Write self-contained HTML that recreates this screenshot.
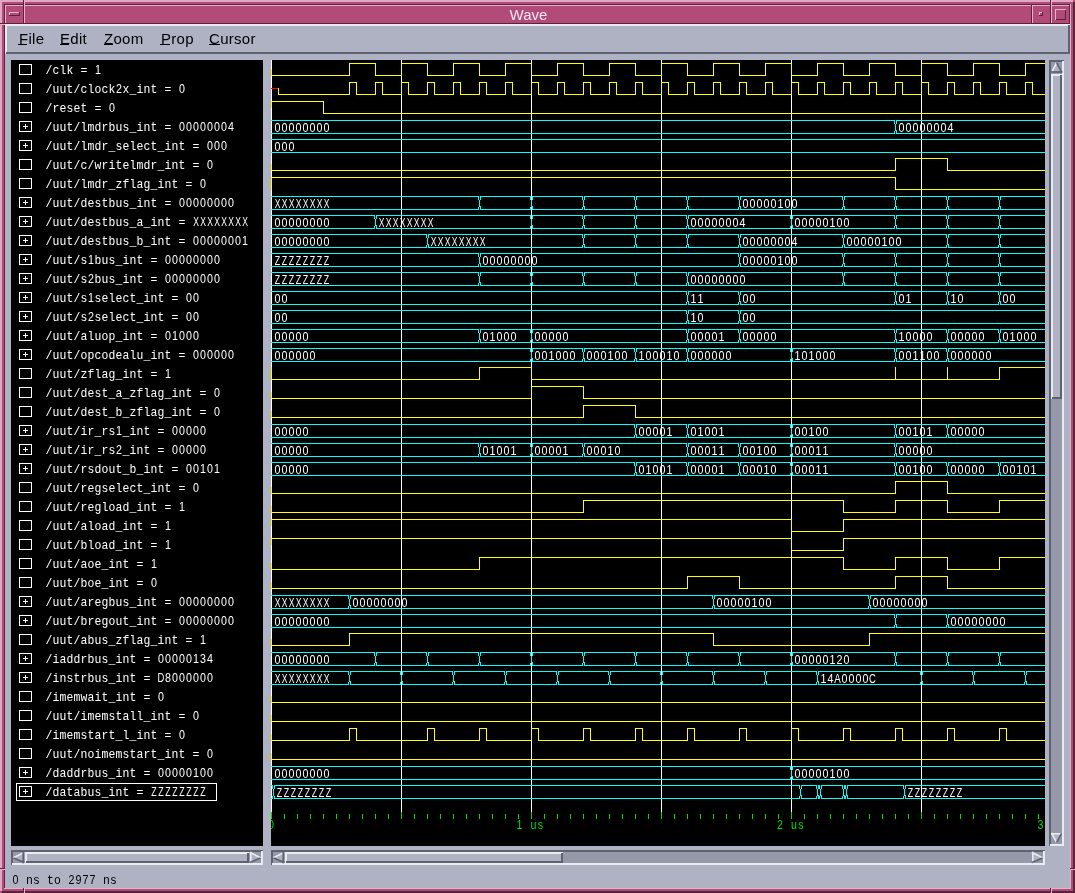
<!DOCTYPE html>
<html><head><meta charset="utf-8"><title>Wave</title><style>
html,body{margin:0;padding:0;width:1075px;height:893px;overflow:hidden;background:#aeb2c3}
svg{display:block;will-change:transform}
text{white-space:pre}
.nm{font-family:"Liberation Mono",monospace;font-size:13px;fill:#fff}
.nmd{font-family:"Liberation Sans",sans-serif;font-size:12.6px;fill:#fff}
.wv{font-family:"Liberation Sans",sans-serif;font-size:12.6px;fill:#fff}
.rl{font-family:"Liberation Sans",sans-serif;font-size:12.6px;fill:#00e000}
.st{font-family:"Liberation Mono",monospace;font-size:13px;fill:#000}
.std{font-family:"Liberation Sans",sans-serif;font-size:12.6px;fill:#000}
.mn{font-family:"Liberation Sans",sans-serif;font-size:15px;letter-spacing:0.3px;fill:#000}
.tt{font-family:"Liberation Sans",sans-serif;font-size:15px;fill:#f4e8ee}
</style></head>
<body><svg width="1075" height="893" viewBox="0 0 1075 893">
<g shape-rendering="crispEdges"><path fill="#b24b78" d="M0 0h1075v893h-1075z"/><path fill="#e0a8c2" d="M0 0h1073v2h-1073zM0 0h2v891h-2z"/><path fill="#58233b" d="M2 891h1073v2h-1073zM1073 2h2v891h-2zM4 4h1067v1h-1067zM4 4h1v885h-1z"/><path fill="#e6b2ca" d="M4 888h1067v1h-1067zM1070 4h1v885h-1z"/><path fill="#58233b" d="M23 0h1v5h-1z"/><path fill="#e6b2ca" d="M24 0h1v5h-1z"/><path fill="#58233b" d="M0 23h5v1h-5z"/><path fill="#e6b2ca" d="M0 24h5v1h-5z"/><path fill="#58233b" d="M1050 0h1v5h-1z"/><path fill="#e6b2ca" d="M1051 0h1v5h-1z"/><path fill="#58233b" d="M1070 868h5v1h-5z"/><path fill="#e6b2ca" d="M1070 869h5v1h-5z"/><path fill="#58233b" d="M23 888h1v5h-1z"/><path fill="#e6b2ca" d="M24 888h1v5h-1z"/><path fill="#58233b" d="M1050 888h1v5h-1z"/><path fill="#e6b2ca" d="M1051 888h1v5h-1z"/><path fill="#58233b" d="M0 868h5v1h-5z"/><path fill="#e6b2ca" d="M0 869h5v1h-5zM5 5h19v1h-19zM5 5h1v19h-1z"/><path fill="#58233b" d="M5 23h19v1h-19zM23 5h1v19h-1z"/><path fill="#e6b2ca" d="M24 5h1008v1h-1008zM24 5h1v19h-1z"/><path fill="#58233b" d="M24 23h1008v1h-1008zM1031 5h1v19h-1z"/><path fill="#e6b2ca" d="M1032 5h19v1h-19zM1032 5h1v19h-1z"/><path fill="#58233b" d="M1032 23h19v1h-19zM1050 5h1v19h-1z"/><path fill="#e6b2ca" d="M1051 5h19v1h-19zM1051 5h1v19h-1z"/><path fill="#58233b" d="M1051 23h19v1h-19zM1069 5h1v19h-1z"/><path fill="#e6b2ca" d="M9 12h11v1h-11zM9 12h1v4h-1z"/><path fill="#58233b" d="M9 15h11v1h-11zM19 12h1v4h-1z"/><path fill="#e6b2ca" d="M1039 12h4v1h-4zM1039 12h1v4h-1z"/><path fill="#58233b" d="M1039 15h4v1h-4zM1042 12h1v4h-1z"/><path fill="#e6b2ca" d="M1055 9h11v1h-11zM1055 9h1v11h-1z"/><path fill="#58233b" d="M1056 19h10v1h-10zM1065 10h1v10h-1z"/><path fill="#aeb2c3" d="M5 24h1065v864h-1065z"/><path fill="#000000" d="M11 60h252v786h-252zM271 60h774v786h-774z"/><path fill="#e9ebf0" d="M5 24h1065v1h-1065zM5 24h1v30h-1z"/><path fill="#5e6270" d="M6 53h1064v1h-1064zM1069 25h1v29h-1z"/><path fill="#e9ebf0" d="M5 25h1064v1h-1064zM6 24h1v29h-1z"/><path fill="#5e6270" d="M6 52h1064v1h-1064zM1068 25h1v29h-1z"/><path fill="#9599a9" d="M11 850h252v15h-252z"/><path fill="#5e6270" d="M11 850h252v1h-252zM11 850h1v15h-1z"/><path fill="#e9ebf0" d="M12 864h251v1h-251zM262 851h1v14h-1z"/><path fill="#5e6270" d="M11 851h251v1h-251zM12 850h1v14h-1z"/><path fill="#e9ebf0" d="M12 863h251v1h-251zM261 851h1v14h-1z"/><path fill="#aeb2c3" d="M25 852h224v11h-224z"/><path fill="#e9ebf0" d="M25 852h224v1h-224zM25 852h1v11h-1z"/><path fill="#5e6270" d="M26 862h223v1h-223zM248 853h1v10h-1z"/><path fill="#e9ebf0" d="M25 853h223v1h-223zM26 852h1v10h-1z"/><path fill="#5e6270" d="M26 861h223v1h-223zM247 853h1v10h-1z"/><path fill="#9599a9" d="M271 850h774v15h-774z"/><path fill="#5e6270" d="M271 850h774v1h-774zM271 850h1v15h-1z"/><path fill="#e9ebf0" d="M272 864h773v1h-773zM1044 851h1v14h-1z"/><path fill="#5e6270" d="M271 851h773v1h-773zM272 850h1v14h-1z"/><path fill="#e9ebf0" d="M272 863h773v1h-773zM1043 851h1v14h-1z"/><path fill="#aeb2c3" d="M285 852h278v11h-278z"/><path fill="#e9ebf0" d="M285 852h278v1h-278zM285 852h1v11h-1z"/><path fill="#5e6270" d="M286 862h277v1h-277zM562 853h1v10h-1z"/><path fill="#e9ebf0" d="M285 853h277v1h-277zM286 852h1v10h-1z"/><path fill="#5e6270" d="M286 861h277v1h-277zM561 853h1v10h-1z"/><path fill="#9599a9" d="M1049 60h15v786h-15z"/><path fill="#5e6270" d="M1049 60h15v1h-15zM1049 60h1v786h-1z"/><path fill="#e9ebf0" d="M1050 845h14v1h-14zM1063 61h1v785h-1z"/><path fill="#5e6270" d="M1049 61h14v1h-14zM1050 60h1v785h-1z"/><path fill="#e9ebf0" d="M1050 844h14v1h-14zM1062 61h1v785h-1z"/><path fill="#aeb2c3" d="M1051 74h11v325h-11z"/><path fill="#e9ebf0" d="M1051 74h11v1h-11zM1051 74h1v325h-1z"/><path fill="#5e6270" d="M1052 398h10v1h-10zM1061 75h1v324h-1z"/><path fill="#e9ebf0" d="M1051 75h10v1h-10zM1052 74h1v324h-1z"/><path fill="#5e6270" d="M1052 397h10v1h-10zM1060 75h1v324h-1z"/><path fill="#ffffff" d="M19 64h13v1h-13zM19 74h13v1h-13zM19 64h1v11h-1zM31 64h1v11h-1zM19 83h13v1h-13zM19 93h13v1h-13zM19 83h1v11h-1zM31 83h1v11h-1zM19 102h13v1h-13zM19 112h13v1h-13zM19 102h1v11h-1zM31 102h1v11h-1zM19 121h13v1h-13zM19 131h13v1h-13zM19 121h1v11h-1zM31 121h1v11h-1zM23 126h5v1h-5zM25 124h1v5h-1zM19 140h13v1h-13zM19 150h13v1h-13zM19 140h1v11h-1zM31 140h1v11h-1zM23 145h5v1h-5zM25 143h1v5h-1zM19 159h13v1h-13zM19 169h13v1h-13zM19 159h1v11h-1zM31 159h1v11h-1zM19 178h13v1h-13zM19 188h13v1h-13zM19 178h1v11h-1zM31 178h1v11h-1zM19 197h13v1h-13zM19 207h13v1h-13zM19 197h1v11h-1zM31 197h1v11h-1zM23 202h5v1h-5zM25 200h1v5h-1zM19 216h13v1h-13zM19 226h13v1h-13zM19 216h1v11h-1zM31 216h1v11h-1zM23 221h5v1h-5zM25 219h1v5h-1zM19 235h13v1h-13zM19 245h13v1h-13zM19 235h1v11h-1zM31 235h1v11h-1zM23 240h5v1h-5zM25 238h1v5h-1zM19 254h13v1h-13zM19 264h13v1h-13zM19 254h1v11h-1zM31 254h1v11h-1zM23 259h5v1h-5zM25 257h1v5h-1zM19 273h13v1h-13zM19 283h13v1h-13zM19 273h1v11h-1zM31 273h1v11h-1zM23 278h5v1h-5zM25 276h1v5h-1zM19 292h13v1h-13zM19 302h13v1h-13zM19 292h1v11h-1zM31 292h1v11h-1zM23 297h5v1h-5zM25 295h1v5h-1zM19 311h13v1h-13zM19 321h13v1h-13zM19 311h1v11h-1zM31 311h1v11h-1zM23 316h5v1h-5zM25 314h1v5h-1zM19 330h13v1h-13zM19 340h13v1h-13zM19 330h1v11h-1zM31 330h1v11h-1zM23 335h5v1h-5zM25 333h1v5h-1zM19 349h13v1h-13zM19 359h13v1h-13zM19 349h1v11h-1zM31 349h1v11h-1zM23 354h5v1h-5zM25 352h1v5h-1zM19 368h13v1h-13zM19 378h13v1h-13zM19 368h1v11h-1zM31 368h1v11h-1zM19 387h13v1h-13zM19 397h13v1h-13zM19 387h1v11h-1zM31 387h1v11h-1zM19 406h13v1h-13zM19 416h13v1h-13zM19 406h1v11h-1zM31 406h1v11h-1zM19 425h13v1h-13zM19 435h13v1h-13zM19 425h1v11h-1zM31 425h1v11h-1zM23 430h5v1h-5zM25 428h1v5h-1zM19 444h13v1h-13zM19 454h13v1h-13zM19 444h1v11h-1zM31 444h1v11h-1zM23 449h5v1h-5zM25 447h1v5h-1zM19 463h13v1h-13zM19 473h13v1h-13zM19 463h1v11h-1zM31 463h1v11h-1zM23 468h5v1h-5zM25 466h1v5h-1zM19 482h13v1h-13zM19 492h13v1h-13zM19 482h1v11h-1zM31 482h1v11h-1zM19 501h13v1h-13zM19 511h13v1h-13zM19 501h1v11h-1zM31 501h1v11h-1zM19 520h13v1h-13zM19 530h13v1h-13zM19 520h1v11h-1zM31 520h1v11h-1zM19 539h13v1h-13zM19 549h13v1h-13zM19 539h1v11h-1zM31 539h1v11h-1zM19 558h13v1h-13zM19 568h13v1h-13zM19 558h1v11h-1zM31 558h1v11h-1zM19 577h13v1h-13zM19 587h13v1h-13zM19 577h1v11h-1zM31 577h1v11h-1zM19 596h13v1h-13zM19 606h13v1h-13zM19 596h1v11h-1zM31 596h1v11h-1zM23 601h5v1h-5zM25 599h1v5h-1zM19 615h13v1h-13zM19 625h13v1h-13zM19 615h1v11h-1zM31 615h1v11h-1zM23 620h5v1h-5zM25 618h1v5h-1zM19 634h13v1h-13zM19 644h13v1h-13zM19 634h1v11h-1zM31 634h1v11h-1zM19 653h13v1h-13zM19 663h13v1h-13zM19 653h1v11h-1zM31 653h1v11h-1zM23 658h5v1h-5zM25 656h1v5h-1zM19 672h13v1h-13zM19 682h13v1h-13zM19 672h1v11h-1zM31 672h1v11h-1zM23 677h5v1h-5zM25 675h1v5h-1zM19 691h13v1h-13zM19 701h13v1h-13zM19 691h1v11h-1zM31 691h1v11h-1zM19 710h13v1h-13zM19 720h13v1h-13zM19 710h1v11h-1zM31 710h1v11h-1zM19 729h13v1h-13zM19 739h13v1h-13zM19 729h1v11h-1zM31 729h1v11h-1zM19 748h13v1h-13zM19 758h13v1h-13zM19 748h1v11h-1zM31 748h1v11h-1zM19 767h13v1h-13zM19 777h13v1h-13zM19 767h1v11h-1zM31 767h1v11h-1zM23 772h5v1h-5zM25 770h1v5h-1zM19 786h13v1h-13zM19 796h13v1h-13zM19 786h1v11h-1zM31 786h1v11h-1zM23 791h5v1h-5zM25 789h1v5h-1zM16 783h201v1h-201zM16 800h201v1h-201zM16 783h1v18h-1zM216 783h1v18h-1zM271 60h1v752h-1zM401 60h1v752h-1zM531 60h1v752h-1zM661 60h1v752h-1zM791 60h1v752h-1zM921 60h1v752h-1z"/><path fill="#00e000" d="M271 812h1v7h-1zM284 814h1v5h-1zM297 814h1v5h-1zM310 814h1v5h-1zM323 814h1v5h-1zM336 814h1v5h-1zM349 814h1v5h-1zM362 814h1v5h-1zM375 814h1v5h-1zM388 814h1v5h-1zM401 812h1v7h-1zM414 814h1v5h-1zM427 814h1v5h-1zM440 814h1v5h-1zM453 814h1v5h-1zM466 814h1v5h-1zM479 814h1v5h-1zM492 814h1v5h-1zM505 814h1v5h-1zM518 814h1v5h-1zM531 812h1v7h-1zM544 814h1v5h-1zM557 814h1v5h-1zM570 814h1v5h-1zM583 814h1v5h-1zM596 814h1v5h-1zM609 814h1v5h-1zM622 814h1v5h-1zM635 814h1v5h-1zM648 814h1v5h-1zM661 812h1v7h-1zM674 814h1v5h-1zM687 814h1v5h-1zM700 814h1v5h-1zM713 814h1v5h-1zM726 814h1v5h-1zM739 814h1v5h-1zM752 814h1v5h-1zM765 814h1v5h-1zM778 814h1v5h-1zM791 812h1v7h-1zM804 814h1v5h-1zM817 814h1v5h-1zM830 814h1v5h-1zM843 814h1v5h-1zM856 814h1v5h-1zM869 814h1v5h-1zM882 814h1v5h-1zM895 814h1v5h-1zM908 814h1v5h-1zM921 812h1v7h-1zM934 814h1v5h-1zM947 814h1v5h-1zM960 814h1v5h-1zM973 814h1v5h-1zM986 814h1v5h-1zM999 814h1v5h-1zM1012 814h1v5h-1zM1025 814h1v5h-1zM1038 814h1v5h-1z"/><path fill="#ffff00" d="M271 69h1v7h-1zM271 75h79v1h-79zM349 63h1v13h-1zM349 63h27v1h-27zM375 63h1v13h-1zM375 75h27v1h-27zM401 63h1v13h-1zM401 63h27v1h-27zM427 63h1v13h-1zM427 75h27v1h-27zM453 63h1v13h-1zM453 63h27v1h-27zM479 63h1v13h-1zM479 75h27v1h-27zM505 63h1v13h-1zM505 63h27v1h-27zM531 63h1v13h-1zM531 75h27v1h-27zM557 63h1v13h-1zM557 63h27v1h-27zM583 63h1v13h-1zM583 75h27v1h-27zM609 63h1v13h-1zM609 63h27v1h-27zM635 63h1v13h-1zM635 75h27v1h-27zM661 63h1v13h-1zM661 63h27v1h-27zM687 63h1v13h-1zM687 75h27v1h-27zM713 63h1v13h-1zM713 63h27v1h-27zM739 63h1v13h-1zM739 75h27v1h-27zM765 63h1v13h-1zM765 63h27v1h-27zM791 63h1v13h-1zM791 75h27v1h-27zM817 63h1v13h-1zM817 63h27v1h-27zM843 63h1v13h-1zM843 75h27v1h-27zM869 63h1v13h-1zM869 63h27v1h-27zM895 63h1v13h-1zM895 75h27v1h-27zM921 63h1v13h-1zM921 63h27v1h-27zM947 63h1v13h-1zM947 75h27v1h-27zM973 63h1v13h-1zM973 63h27v1h-27zM999 63h1v13h-1zM999 75h27v1h-27zM1025 63h1v13h-1zM1025 63h20v1h-20z"/><path fill="#ff0000" d="M271 88h7v1h-7z"/><path fill="#ffff00" d="M278 88h1v7h-1zM278 94h72v1h-72zM349 82h1v13h-1zM349 82h8v1h-8zM356 82h1v13h-1zM356 94h20v1h-20zM375 82h1v13h-1zM375 82h8v1h-8zM382 82h1v13h-1zM382 94h20v1h-20zM401 82h1v13h-1zM401 82h8v1h-8zM408 82h1v13h-1zM408 94h20v1h-20zM427 82h1v13h-1zM427 82h8v1h-8zM434 82h1v13h-1zM434 94h20v1h-20zM453 82h1v13h-1zM453 82h8v1h-8zM460 82h1v13h-1zM460 94h20v1h-20zM479 82h1v13h-1zM479 82h8v1h-8zM486 82h1v13h-1zM486 94h20v1h-20zM505 82h1v13h-1zM505 82h8v1h-8zM512 82h1v13h-1zM512 94h20v1h-20zM531 82h1v13h-1zM531 82h8v1h-8zM538 82h1v13h-1zM538 94h20v1h-20zM557 82h1v13h-1zM557 82h8v1h-8zM564 82h1v13h-1zM564 94h20v1h-20zM583 82h1v13h-1zM583 82h8v1h-8zM590 82h1v13h-1zM590 94h20v1h-20zM609 82h1v13h-1zM609 82h8v1h-8zM616 82h1v13h-1zM616 94h20v1h-20zM635 82h1v13h-1zM635 82h8v1h-8zM642 82h1v13h-1zM642 94h20v1h-20zM661 82h1v13h-1zM661 82h8v1h-8zM668 82h1v13h-1zM668 94h20v1h-20zM687 82h1v13h-1zM687 82h8v1h-8zM694 82h1v13h-1zM694 94h20v1h-20zM713 82h1v13h-1zM713 82h8v1h-8zM720 82h1v13h-1zM720 94h20v1h-20zM739 82h1v13h-1zM739 82h8v1h-8zM746 82h1v13h-1zM746 94h20v1h-20zM765 82h1v13h-1zM765 82h8v1h-8zM772 82h1v13h-1zM772 94h20v1h-20zM791 82h1v13h-1zM791 82h8v1h-8zM798 82h1v13h-1zM798 94h20v1h-20zM817 82h1v13h-1zM817 82h8v1h-8zM824 82h1v13h-1zM824 94h20v1h-20zM843 82h1v13h-1zM843 82h8v1h-8zM850 82h1v13h-1zM850 94h20v1h-20zM869 82h1v13h-1zM869 82h8v1h-8zM876 82h1v13h-1zM876 94h20v1h-20zM895 82h1v13h-1zM895 82h8v1h-8zM902 82h1v13h-1zM902 94h20v1h-20zM921 82h1v13h-1zM921 82h8v1h-8zM928 82h1v13h-1zM928 94h20v1h-20zM947 82h1v13h-1zM947 82h8v1h-8zM954 82h1v13h-1zM954 94h20v1h-20zM973 82h1v13h-1zM973 82h8v1h-8zM980 82h1v13h-1zM980 94h20v1h-20zM999 82h1v13h-1zM999 82h8v1h-8zM1006 82h1v13h-1zM1006 94h20v1h-20zM1025 82h1v13h-1zM1025 82h8v1h-8zM1032 82h1v13h-1zM1032 94h13v1h-13zM271 101h1v7h-1zM271 101h53v1h-53zM323 101h1v13h-1zM323 113h722v1h-722z"/><path fill="#00ffff" d="M271 120h624v1h-624zM271 133h624v1h-624zM896 120h149v1h-149zM896 133h149v1h-149zM894 121h1v3h-1zM896 121h1v3h-1zM894 131h1v2h-1zM896 130h1v3h-1zM895 124h1v7h-1zM271 139h774v1h-774zM271 152h774v1h-774z"/><path fill="#ffff00" d="M271 164h1v7h-1zM271 170h625v1h-625zM895 158h1v13h-1zM895 158h53v1h-53zM947 158h1v13h-1zM947 170h98v1h-98zM271 177h1v13h-1zM271 177h625v1h-625zM895 177h1v13h-1zM895 189h150v1h-150z"/><path fill="#00ffff" d="M271 196h208v1h-208zM271 209h208v1h-208zM480 196h51v1h-51zM480 209h51v1h-51zM532 196h51v1h-51zM532 209h51v1h-51zM584 196h51v1h-51zM584 209h51v1h-51zM636 196h51v1h-51zM636 209h51v1h-51zM688 196h51v1h-51zM688 209h51v1h-51zM740 196h103v1h-103zM740 209h103v1h-103zM844 196h51v1h-51zM844 209h51v1h-51zM896 196h51v1h-51zM896 209h51v1h-51zM948 196h51v1h-51zM948 209h51v1h-51zM1000 196h45v1h-45zM1000 209h45v1h-45zM478 197h1v3h-1zM480 197h1v3h-1zM478 207h1v2h-1zM480 206h1v3h-1zM479 200h1v7h-1zM530 197h1v3h-1zM532 197h1v3h-1zM530 207h1v2h-1zM532 206h1v3h-1zM531 200h1v7h-1zM582 197h1v3h-1zM584 197h1v3h-1zM582 207h1v2h-1zM584 206h1v3h-1zM583 200h1v7h-1zM634 197h1v3h-1zM636 197h1v3h-1zM634 207h1v2h-1zM636 206h1v3h-1zM635 200h1v7h-1zM686 197h1v3h-1zM688 197h1v3h-1zM686 207h1v2h-1zM688 206h1v3h-1zM687 200h1v7h-1zM738 197h1v3h-1zM740 197h1v3h-1zM738 207h1v2h-1zM740 206h1v3h-1zM739 200h1v7h-1zM842 197h1v3h-1zM844 197h1v3h-1zM842 207h1v2h-1zM844 206h1v3h-1zM843 200h1v7h-1zM894 197h1v3h-1zM896 197h1v3h-1zM894 207h1v2h-1zM896 206h1v3h-1zM895 200h1v7h-1zM946 197h1v3h-1zM948 197h1v3h-1zM946 207h1v2h-1zM948 206h1v3h-1zM947 200h1v7h-1zM998 197h1v3h-1zM1000 197h1v3h-1zM998 207h1v2h-1zM1000 206h1v3h-1zM999 200h1v7h-1zM271 215h104v1h-104zM271 228h104v1h-104zM376 215h155v1h-155zM376 228h155v1h-155zM532 215h51v1h-51zM532 228h51v1h-51zM584 215h51v1h-51zM584 228h51v1h-51zM636 215h51v1h-51zM636 228h51v1h-51zM688 215h103v1h-103zM688 228h103v1h-103zM792 215h103v1h-103zM792 228h103v1h-103zM896 215h51v1h-51zM896 228h51v1h-51zM948 215h51v1h-51zM948 228h51v1h-51zM1000 215h45v1h-45zM1000 228h45v1h-45zM374 216h1v3h-1zM376 216h1v3h-1zM374 226h1v2h-1zM376 225h1v3h-1zM375 219h1v7h-1zM530 216h1v3h-1zM532 216h1v3h-1zM530 226h1v2h-1zM532 225h1v3h-1zM531 219h1v7h-1zM582 216h1v3h-1zM584 216h1v3h-1zM582 226h1v2h-1zM584 225h1v3h-1zM583 219h1v7h-1zM634 216h1v3h-1zM636 216h1v3h-1zM634 226h1v2h-1zM636 225h1v3h-1zM635 219h1v7h-1zM686 216h1v3h-1zM688 216h1v3h-1zM686 226h1v2h-1zM688 225h1v3h-1zM687 219h1v7h-1zM790 216h1v3h-1zM792 216h1v3h-1zM790 226h1v2h-1zM792 225h1v3h-1zM791 219h1v7h-1zM894 216h1v3h-1zM896 216h1v3h-1zM894 226h1v2h-1zM896 225h1v3h-1zM895 219h1v7h-1zM946 216h1v3h-1zM948 216h1v3h-1zM946 226h1v2h-1zM948 225h1v3h-1zM947 219h1v7h-1zM998 216h1v3h-1zM1000 216h1v3h-1zM998 226h1v2h-1zM1000 225h1v3h-1zM999 219h1v7h-1zM271 234h156v1h-156zM271 247h156v1h-156zM428 234h155v1h-155zM428 247h155v1h-155zM584 234h51v1h-51zM584 247h51v1h-51zM636 234h51v1h-51zM636 247h51v1h-51zM688 234h51v1h-51zM688 247h51v1h-51zM740 234h103v1h-103zM740 247h103v1h-103zM844 234h103v1h-103zM844 247h103v1h-103zM948 234h51v1h-51zM948 247h51v1h-51zM1000 234h45v1h-45zM1000 247h45v1h-45zM426 235h1v3h-1zM428 235h1v3h-1zM426 245h1v2h-1zM428 244h1v3h-1zM427 238h1v7h-1zM582 235h1v3h-1zM584 235h1v3h-1zM582 245h1v2h-1zM584 244h1v3h-1zM583 238h1v7h-1zM634 235h1v3h-1zM636 235h1v3h-1zM634 245h1v2h-1zM636 244h1v3h-1zM635 238h1v7h-1zM686 235h1v3h-1zM688 235h1v3h-1zM686 245h1v2h-1zM688 244h1v3h-1zM687 238h1v7h-1zM738 235h1v3h-1zM740 235h1v3h-1zM738 245h1v2h-1zM740 244h1v3h-1zM739 238h1v7h-1zM842 235h1v3h-1zM844 235h1v3h-1zM842 245h1v2h-1zM844 244h1v3h-1zM843 238h1v7h-1zM946 235h1v3h-1zM948 235h1v3h-1zM946 245h1v2h-1zM948 244h1v3h-1zM947 238h1v7h-1zM998 235h1v3h-1zM1000 235h1v3h-1zM998 245h1v2h-1zM1000 244h1v3h-1zM999 238h1v7h-1zM271 253h208v1h-208zM271 266h208v1h-208zM480 253h259v1h-259zM480 266h259v1h-259zM740 253h103v1h-103zM740 266h103v1h-103zM844 253h51v1h-51zM844 266h51v1h-51zM896 253h51v1h-51zM896 266h51v1h-51zM948 253h51v1h-51zM948 266h51v1h-51zM1000 253h45v1h-45zM1000 266h45v1h-45zM478 254h1v3h-1zM480 254h1v3h-1zM478 264h1v2h-1zM480 263h1v3h-1zM479 257h1v7h-1zM738 254h1v3h-1zM740 254h1v3h-1zM738 264h1v2h-1zM740 263h1v3h-1zM739 257h1v7h-1zM842 254h1v3h-1zM844 254h1v3h-1zM842 264h1v2h-1zM844 263h1v3h-1zM843 257h1v7h-1zM894 254h1v3h-1zM896 254h1v3h-1zM894 264h1v2h-1zM896 263h1v3h-1zM895 257h1v7h-1zM946 254h1v3h-1zM948 254h1v3h-1zM946 264h1v2h-1zM948 263h1v3h-1zM947 257h1v7h-1zM998 254h1v3h-1zM1000 254h1v3h-1zM998 264h1v2h-1zM1000 263h1v3h-1zM999 257h1v7h-1zM271 272h208v1h-208zM271 285h208v1h-208zM480 272h51v1h-51zM480 285h51v1h-51zM532 272h51v1h-51zM532 285h51v1h-51zM584 272h51v1h-51zM584 285h51v1h-51zM636 272h51v1h-51zM636 285h51v1h-51zM688 272h155v1h-155zM688 285h155v1h-155zM844 272h51v1h-51zM844 285h51v1h-51zM896 272h51v1h-51zM896 285h51v1h-51zM948 272h51v1h-51zM948 285h51v1h-51zM1000 272h45v1h-45zM1000 285h45v1h-45zM478 273h1v3h-1zM480 273h1v3h-1zM478 283h1v2h-1zM480 282h1v3h-1zM479 276h1v7h-1zM530 273h1v3h-1zM532 273h1v3h-1zM530 283h1v2h-1zM532 282h1v3h-1zM531 276h1v7h-1zM582 273h1v3h-1zM584 273h1v3h-1zM582 283h1v2h-1zM584 282h1v3h-1zM583 276h1v7h-1zM634 273h1v3h-1zM636 273h1v3h-1zM634 283h1v2h-1zM636 282h1v3h-1zM635 276h1v7h-1zM686 273h1v3h-1zM688 273h1v3h-1zM686 283h1v2h-1zM688 282h1v3h-1zM687 276h1v7h-1zM842 273h1v3h-1zM844 273h1v3h-1zM842 283h1v2h-1zM844 282h1v3h-1zM843 276h1v7h-1zM894 273h1v3h-1zM896 273h1v3h-1zM894 283h1v2h-1zM896 282h1v3h-1zM895 276h1v7h-1zM946 273h1v3h-1zM948 273h1v3h-1zM946 283h1v2h-1zM948 282h1v3h-1zM947 276h1v7h-1zM998 273h1v3h-1zM1000 273h1v3h-1zM998 283h1v2h-1zM1000 282h1v3h-1zM999 276h1v7h-1zM271 291h416v1h-416zM271 304h416v1h-416zM688 291h51v1h-51zM688 304h51v1h-51zM740 291h155v1h-155zM740 304h155v1h-155zM896 291h51v1h-51zM896 304h51v1h-51zM948 291h51v1h-51zM948 304h51v1h-51zM1000 291h45v1h-45zM1000 304h45v1h-45zM686 292h1v3h-1zM688 292h1v3h-1zM686 302h1v2h-1zM688 301h1v3h-1zM687 295h1v7h-1zM738 292h1v3h-1zM740 292h1v3h-1zM738 302h1v2h-1zM740 301h1v3h-1zM739 295h1v7h-1zM894 292h1v3h-1zM896 292h1v3h-1zM894 302h1v2h-1zM896 301h1v3h-1zM895 295h1v7h-1zM946 292h1v3h-1zM948 292h1v3h-1zM946 302h1v2h-1zM948 301h1v3h-1zM947 295h1v7h-1zM998 292h1v3h-1zM1000 292h1v3h-1zM998 302h1v2h-1zM1000 301h1v3h-1zM999 295h1v7h-1zM271 310h416v1h-416zM271 323h416v1h-416zM688 310h51v1h-51zM688 323h51v1h-51zM740 310h305v1h-305zM740 323h305v1h-305zM686 311h1v3h-1zM688 311h1v3h-1zM686 321h1v2h-1zM688 320h1v3h-1zM687 314h1v7h-1zM738 311h1v3h-1zM740 311h1v3h-1zM738 321h1v2h-1zM740 320h1v3h-1zM739 314h1v7h-1zM271 329h208v1h-208zM271 342h208v1h-208zM480 329h51v1h-51zM480 342h51v1h-51zM532 329h155v1h-155zM532 342h155v1h-155zM688 329h51v1h-51zM688 342h51v1h-51zM740 329h155v1h-155zM740 342h155v1h-155zM896 329h51v1h-51zM896 342h51v1h-51zM948 329h51v1h-51zM948 342h51v1h-51zM1000 329h45v1h-45zM1000 342h45v1h-45zM478 330h1v3h-1zM480 330h1v3h-1zM478 340h1v2h-1zM480 339h1v3h-1zM479 333h1v7h-1zM530 330h1v3h-1zM532 330h1v3h-1zM530 340h1v2h-1zM532 339h1v3h-1zM531 333h1v7h-1zM686 330h1v3h-1zM688 330h1v3h-1zM686 340h1v2h-1zM688 339h1v3h-1zM687 333h1v7h-1zM738 330h1v3h-1zM740 330h1v3h-1zM738 340h1v2h-1zM740 339h1v3h-1zM739 333h1v7h-1zM894 330h1v3h-1zM896 330h1v3h-1zM894 340h1v2h-1zM896 339h1v3h-1zM895 333h1v7h-1zM946 330h1v3h-1zM948 330h1v3h-1zM946 340h1v2h-1zM948 339h1v3h-1zM947 333h1v7h-1zM998 330h1v3h-1zM1000 330h1v3h-1zM998 340h1v2h-1zM1000 339h1v3h-1zM999 333h1v7h-1zM271 348h260v1h-260zM271 361h260v1h-260zM532 348h51v1h-51zM532 361h51v1h-51zM584 348h51v1h-51zM584 361h51v1h-51zM636 348h51v1h-51zM636 361h51v1h-51zM688 348h103v1h-103zM688 361h103v1h-103zM792 348h103v1h-103zM792 361h103v1h-103zM896 348h51v1h-51zM896 361h51v1h-51zM948 348h97v1h-97zM948 361h97v1h-97zM530 349h1v3h-1zM532 349h1v3h-1zM530 359h1v2h-1zM532 358h1v3h-1zM531 352h1v7h-1zM582 349h1v3h-1zM584 349h1v3h-1zM582 359h1v2h-1zM584 358h1v3h-1zM583 352h1v7h-1zM634 349h1v3h-1zM636 349h1v3h-1zM634 359h1v2h-1zM636 358h1v3h-1zM635 352h1v7h-1zM686 349h1v3h-1zM688 349h1v3h-1zM686 359h1v2h-1zM688 358h1v3h-1zM687 352h1v7h-1zM790 349h1v3h-1zM792 349h1v3h-1zM790 359h1v2h-1zM792 358h1v3h-1zM791 352h1v7h-1zM894 349h1v3h-1zM896 349h1v3h-1zM894 359h1v2h-1zM896 358h1v3h-1zM895 352h1v7h-1zM946 349h1v3h-1zM948 349h1v3h-1zM946 359h1v2h-1zM948 358h1v3h-1zM947 352h1v7h-1z"/><path fill="#ffff00" d="M271 367h1v13h-1zM271 379h209v1h-209zM479 367h1v13h-1zM479 367h53v1h-53zM531 367h1v13h-1zM531 379h469v1h-469zM999 367h1v13h-1zM999 367h46v1h-46zM895 367h1v13h-1zM947 367h1v13h-1zM271 392h1v7h-1zM271 398h261v1h-261zM531 386h1v13h-1zM531 386h53v1h-53zM583 386h1v13h-1zM583 398h462v1h-462zM271 411h1v7h-1zM271 417h313v1h-313zM583 405h1v13h-1zM583 405h53v1h-53zM635 405h1v13h-1zM635 417h410v1h-410z"/><path fill="#00ffff" d="M271 424h364v1h-364zM271 437h364v1h-364zM636 424h51v1h-51zM636 437h51v1h-51zM688 424h103v1h-103zM688 437h103v1h-103zM792 424h103v1h-103zM792 437h103v1h-103zM896 424h51v1h-51zM896 437h51v1h-51zM948 424h97v1h-97zM948 437h97v1h-97zM634 425h1v3h-1zM636 425h1v3h-1zM634 435h1v2h-1zM636 434h1v3h-1zM635 428h1v7h-1zM686 425h1v3h-1zM688 425h1v3h-1zM686 435h1v2h-1zM688 434h1v3h-1zM687 428h1v7h-1zM790 425h1v3h-1zM792 425h1v3h-1zM790 435h1v2h-1zM792 434h1v3h-1zM791 428h1v7h-1zM894 425h1v3h-1zM896 425h1v3h-1zM894 435h1v2h-1zM896 434h1v3h-1zM895 428h1v7h-1zM946 425h1v3h-1zM948 425h1v3h-1zM946 435h1v2h-1zM948 434h1v3h-1zM947 428h1v7h-1zM271 443h208v1h-208zM271 456h208v1h-208zM480 443h51v1h-51zM480 456h51v1h-51zM532 443h51v1h-51zM532 456h51v1h-51zM584 443h103v1h-103zM584 456h103v1h-103zM688 443h51v1h-51zM688 456h51v1h-51zM740 443h51v1h-51zM740 456h51v1h-51zM792 443h103v1h-103zM792 456h103v1h-103zM896 443h149v1h-149zM896 456h149v1h-149zM478 444h1v3h-1zM480 444h1v3h-1zM478 454h1v2h-1zM480 453h1v3h-1zM479 447h1v7h-1zM530 444h1v3h-1zM532 444h1v3h-1zM530 454h1v2h-1zM532 453h1v3h-1zM531 447h1v7h-1zM582 444h1v3h-1zM584 444h1v3h-1zM582 454h1v2h-1zM584 453h1v3h-1zM583 447h1v7h-1zM686 444h1v3h-1zM688 444h1v3h-1zM686 454h1v2h-1zM688 453h1v3h-1zM687 447h1v7h-1zM738 444h1v3h-1zM740 444h1v3h-1zM738 454h1v2h-1zM740 453h1v3h-1zM739 447h1v7h-1zM790 444h1v3h-1zM792 444h1v3h-1zM790 454h1v2h-1zM792 453h1v3h-1zM791 447h1v7h-1zM894 444h1v3h-1zM896 444h1v3h-1zM894 454h1v2h-1zM896 453h1v3h-1zM895 447h1v7h-1zM271 462h364v1h-364zM271 475h364v1h-364zM636 462h51v1h-51zM636 475h51v1h-51zM688 462h51v1h-51zM688 475h51v1h-51zM740 462h51v1h-51zM740 475h51v1h-51zM792 462h103v1h-103zM792 475h103v1h-103zM896 462h51v1h-51zM896 475h51v1h-51zM948 462h51v1h-51zM948 475h51v1h-51zM1000 462h45v1h-45zM1000 475h45v1h-45zM634 463h1v3h-1zM636 463h1v3h-1zM634 473h1v2h-1zM636 472h1v3h-1zM635 466h1v7h-1zM686 463h1v3h-1zM688 463h1v3h-1zM686 473h1v2h-1zM688 472h1v3h-1zM687 466h1v7h-1zM738 463h1v3h-1zM740 463h1v3h-1zM738 473h1v2h-1zM740 472h1v3h-1zM739 466h1v7h-1zM790 463h1v3h-1zM792 463h1v3h-1zM790 473h1v2h-1zM792 472h1v3h-1zM791 466h1v7h-1zM894 463h1v3h-1zM896 463h1v3h-1zM894 473h1v2h-1zM896 472h1v3h-1zM895 466h1v7h-1zM946 463h1v3h-1zM948 463h1v3h-1zM946 473h1v2h-1zM948 472h1v3h-1zM947 466h1v7h-1zM998 463h1v3h-1zM1000 463h1v3h-1zM998 473h1v2h-1zM1000 472h1v3h-1zM999 466h1v7h-1z"/><path fill="#ffff00" d="M271 487h1v7h-1zM271 493h625v1h-625zM895 481h1v13h-1zM895 481h53v1h-53zM947 481h1v13h-1zM947 493h98v1h-98zM271 506h1v7h-1zM271 512h313v1h-313zM583 500h1v13h-1zM583 500h261v1h-261zM843 500h1v13h-1zM843 512h53v1h-53zM895 500h1v13h-1zM895 500h53v1h-53zM947 500h1v13h-1zM947 512h53v1h-53zM999 500h1v13h-1zM999 500h46v1h-46zM271 519h1v7h-1zM271 519h521v1h-521zM791 519h1v13h-1zM791 531h53v1h-53zM843 519h1v13h-1zM843 519h202v1h-202zM271 538h1v7h-1zM271 538h521v1h-521zM791 538h1v13h-1zM791 550h53v1h-53zM843 538h1v13h-1zM843 538h202v1h-202zM271 563h1v7h-1zM271 569h209v1h-209zM479 557h1v13h-1zM479 557h365v1h-365zM843 557h1v13h-1zM843 569h53v1h-53zM895 557h1v13h-1zM895 557h53v1h-53zM947 557h1v13h-1zM947 569h53v1h-53zM999 557h1v13h-1zM999 557h46v1h-46zM271 582h1v7h-1zM271 588h417v1h-417zM687 576h1v13h-1zM687 576h53v1h-53zM739 576h1v13h-1zM739 588h157v1h-157zM895 576h1v13h-1zM895 576h53v1h-53zM947 576h1v13h-1zM947 588h98v1h-98z"/><path fill="#00ffff" d="M271 595h78v1h-78zM271 608h78v1h-78zM350 595h363v1h-363zM350 608h363v1h-363zM714 595h155v1h-155zM714 608h155v1h-155zM870 595h175v1h-175zM870 608h175v1h-175zM348 596h1v3h-1zM350 596h1v3h-1zM348 606h1v2h-1zM350 605h1v3h-1zM349 599h1v7h-1zM712 596h1v3h-1zM714 596h1v3h-1zM712 606h1v2h-1zM714 605h1v3h-1zM713 599h1v7h-1zM868 596h1v3h-1zM870 596h1v3h-1zM868 606h1v2h-1zM870 605h1v3h-1zM869 599h1v7h-1zM271 614h624v1h-624zM271 627h624v1h-624zM896 614h51v1h-51zM896 627h51v1h-51zM948 614h97v1h-97zM948 627h97v1h-97zM894 615h1v3h-1zM896 615h1v3h-1zM894 625h1v2h-1zM896 624h1v3h-1zM895 618h1v7h-1zM946 615h1v3h-1zM948 615h1v3h-1zM946 625h1v2h-1zM948 624h1v3h-1zM947 618h1v7h-1z"/><path fill="#ffff00" d="M271 639h1v7h-1zM271 645h79v1h-79zM349 633h1v13h-1zM349 633h365v1h-365zM713 633h1v13h-1zM713 645h157v1h-157zM869 633h1v13h-1zM869 633h176v1h-176z"/><path fill="#00ffff" d="M271 652h104v1h-104zM271 665h104v1h-104zM376 652h51v1h-51zM376 665h51v1h-51zM428 652h51v1h-51zM428 665h51v1h-51zM480 652h51v1h-51zM480 665h51v1h-51zM532 652h51v1h-51zM532 665h51v1h-51zM584 652h51v1h-51zM584 665h51v1h-51zM636 652h51v1h-51zM636 665h51v1h-51zM688 652h51v1h-51zM688 665h51v1h-51zM740 652h51v1h-51zM740 665h51v1h-51zM792 652h103v1h-103zM792 665h103v1h-103zM896 652h51v1h-51zM896 665h51v1h-51zM948 652h51v1h-51zM948 665h51v1h-51zM1000 652h45v1h-45zM1000 665h45v1h-45zM374 653h1v3h-1zM376 653h1v3h-1zM374 663h1v2h-1zM376 662h1v3h-1zM375 656h1v7h-1zM426 653h1v3h-1zM428 653h1v3h-1zM426 663h1v2h-1zM428 662h1v3h-1zM427 656h1v7h-1zM478 653h1v3h-1zM480 653h1v3h-1zM478 663h1v2h-1zM480 662h1v3h-1zM479 656h1v7h-1zM530 653h1v3h-1zM532 653h1v3h-1zM530 663h1v2h-1zM532 662h1v3h-1zM531 656h1v7h-1zM582 653h1v3h-1zM584 653h1v3h-1zM582 663h1v2h-1zM584 662h1v3h-1zM583 656h1v7h-1zM634 653h1v3h-1zM636 653h1v3h-1zM634 663h1v2h-1zM636 662h1v3h-1zM635 656h1v7h-1zM686 653h1v3h-1zM688 653h1v3h-1zM686 663h1v2h-1zM688 662h1v3h-1zM687 656h1v7h-1zM738 653h1v3h-1zM740 653h1v3h-1zM738 663h1v2h-1zM740 662h1v3h-1zM739 656h1v7h-1zM790 653h1v3h-1zM792 653h1v3h-1zM790 663h1v2h-1zM792 662h1v3h-1zM791 656h1v7h-1zM894 653h1v3h-1zM896 653h1v3h-1zM894 663h1v2h-1zM896 662h1v3h-1zM895 656h1v7h-1zM946 653h1v3h-1zM948 653h1v3h-1zM946 663h1v2h-1zM948 662h1v3h-1zM947 656h1v7h-1zM998 653h1v3h-1zM1000 653h1v3h-1zM998 663h1v2h-1zM1000 662h1v3h-1zM999 656h1v7h-1zM271 671h78v1h-78zM271 684h78v1h-78zM350 671h51v1h-51zM350 684h51v1h-51zM402 671h51v1h-51zM402 684h51v1h-51zM454 671h51v1h-51zM454 684h51v1h-51zM506 671h51v1h-51zM506 684h51v1h-51zM558 671h51v1h-51zM558 684h51v1h-51zM610 671h51v1h-51zM610 684h51v1h-51zM662 671h51v1h-51zM662 684h51v1h-51zM714 671h51v1h-51zM714 684h51v1h-51zM766 671h51v1h-51zM766 684h51v1h-51zM818 671h103v1h-103zM818 684h103v1h-103zM922 671h51v1h-51zM922 684h51v1h-51zM974 671h51v1h-51zM974 684h51v1h-51zM1026 671h19v1h-19zM1026 684h19v1h-19zM348 672h1v3h-1zM350 672h1v3h-1zM348 682h1v2h-1zM350 681h1v3h-1zM349 675h1v7h-1zM400 672h1v3h-1zM402 672h1v3h-1zM400 682h1v2h-1zM402 681h1v3h-1zM401 675h1v7h-1zM452 672h1v3h-1zM454 672h1v3h-1zM452 682h1v2h-1zM454 681h1v3h-1zM453 675h1v7h-1zM504 672h1v3h-1zM506 672h1v3h-1zM504 682h1v2h-1zM506 681h1v3h-1zM505 675h1v7h-1zM556 672h1v3h-1zM558 672h1v3h-1zM556 682h1v2h-1zM558 681h1v3h-1zM557 675h1v7h-1zM608 672h1v3h-1zM610 672h1v3h-1zM608 682h1v2h-1zM610 681h1v3h-1zM609 675h1v7h-1zM660 672h1v3h-1zM662 672h1v3h-1zM660 682h1v2h-1zM662 681h1v3h-1zM661 675h1v7h-1zM712 672h1v3h-1zM714 672h1v3h-1zM712 682h1v2h-1zM714 681h1v3h-1zM713 675h1v7h-1zM764 672h1v3h-1zM766 672h1v3h-1zM764 682h1v2h-1zM766 681h1v3h-1zM765 675h1v7h-1zM816 672h1v3h-1zM818 672h1v3h-1zM816 682h1v2h-1zM818 681h1v3h-1zM817 675h1v7h-1zM920 672h1v3h-1zM922 672h1v3h-1zM920 682h1v2h-1zM922 681h1v3h-1zM921 675h1v7h-1zM972 672h1v3h-1zM974 672h1v3h-1zM972 682h1v2h-1zM974 681h1v3h-1zM973 675h1v7h-1zM1024 672h1v3h-1zM1026 672h1v3h-1zM1024 682h1v2h-1zM1026 681h1v3h-1zM1025 675h1v7h-1z"/><path fill="#ffff00" d="M271 696h1v7h-1zM271 702h774v1h-774zM271 715h1v7h-1zM271 721h774v1h-774zM271 734h1v7h-1zM271 740h79v1h-79zM349 728h1v13h-1zM349 728h8v1h-8zM356 728h1v13h-1zM356 740h72v1h-72zM427 728h1v13h-1zM427 728h8v1h-8zM434 728h1v13h-1zM434 740h46v1h-46zM479 728h1v13h-1zM479 728h8v1h-8zM486 728h1v13h-1zM486 740h46v1h-46zM531 728h1v13h-1zM531 728h8v1h-8zM538 728h1v13h-1zM538 740h46v1h-46zM583 728h1v13h-1zM583 728h8v1h-8zM590 728h1v13h-1zM590 740h46v1h-46zM635 728h1v13h-1zM635 728h8v1h-8zM642 728h1v13h-1zM642 740h46v1h-46zM687 728h1v13h-1zM687 728h8v1h-8zM694 728h1v13h-1zM694 740h46v1h-46zM739 728h1v13h-1zM739 728h8v1h-8zM746 728h1v13h-1zM746 740h46v1h-46zM791 728h1v13h-1zM791 728h8v1h-8zM798 728h1v13h-1zM798 740h46v1h-46zM843 728h1v13h-1zM843 728h8v1h-8zM850 728h1v13h-1zM850 740h46v1h-46zM895 728h1v13h-1zM895 728h8v1h-8zM902 728h1v13h-1zM902 740h46v1h-46zM947 728h1v13h-1zM947 728h8v1h-8zM954 728h1v13h-1zM954 740h46v1h-46zM999 728h1v13h-1zM999 728h8v1h-8zM1006 728h1v13h-1zM1006 740h39v1h-39zM271 753h1v7h-1zM271 759h774v1h-774z"/><path fill="#00ffff" d="M271 766h520v1h-520zM271 779h520v1h-520zM792 766h253v1h-253zM792 779h253v1h-253zM790 767h1v3h-1zM792 767h1v3h-1zM790 777h1v2h-1zM792 776h1v3h-1zM791 770h1v7h-1zM271 785h2v1h-2zM271 798h2v1h-2zM272 786h1v3h-1zM272 796h1v2h-1zM273 789h1v7h-1zM274 786h1v3h-1zM274 796h1v2h-1zM274 785h526v1h-526zM274 798h526v1h-526zM801 785h16v1h-16zM801 798h16v1h-16zM818 785h2v1h-2zM818 798h2v1h-2zM821 785h22v1h-22zM821 798h22v1h-22zM844 785h2v1h-2zM844 798h2v1h-2zM847 785h57v1h-57zM847 798h57v1h-57zM905 785h140v1h-140zM905 798h140v1h-140zM799 786h1v3h-1zM801 786h1v3h-1zM799 796h1v2h-1zM801 795h1v3h-1zM800 789h1v7h-1zM816 786h1v3h-1zM818 786h1v3h-1zM816 796h1v2h-1zM818 795h1v3h-1zM817 789h1v7h-1zM819 786h1v3h-1zM821 786h1v3h-1zM819 796h1v2h-1zM821 795h1v3h-1zM820 789h1v7h-1zM842 786h1v3h-1zM844 786h1v3h-1zM842 796h1v2h-1zM844 795h1v3h-1zM843 789h1v7h-1zM845 786h1v3h-1zM847 786h1v3h-1zM845 796h1v2h-1zM847 795h1v3h-1zM846 789h1v7h-1zM903 786h1v3h-1zM905 786h1v3h-1zM903 796h1v2h-1zM905 795h1v3h-1zM904 789h1v7h-1z"/><path fill="#000000" d="M18 44h9v1h-9zM60 44h9v1h-9zM104 44h9v1h-9zM160 44h10v1h-10zM209 44h11v1h-11z"/></g>
<g><polygon points="13,857.5 24,852 24,863" fill="#aeb2c3"/><line x1="13.8" y1="857.5" x2="23.5" y2="852.8" stroke="#e9ebf0" stroke-width="1.6" stroke-linecap="square"/><line x1="14.2" y1="858.3" x2="23.5" y2="862.2" stroke="#5e6270" stroke-width="1.6" stroke-linecap="square"/><line x1="23.2" y1="852.5" x2="23.2" y2="862.5" stroke="#5e6270" stroke-width="1.6" stroke-linecap="square"/><polygon points="261,857.5 250,852 250,863" fill="#aeb2c3"/><line x1="250.8" y1="852.5" x2="250.8" y2="862.5" stroke="#e9ebf0" stroke-width="1.6" stroke-linecap="square"/><line x1="250.5" y1="852.8" x2="260.2" y2="857.5" stroke="#e9ebf0" stroke-width="1.6" stroke-linecap="square"/><line x1="250.5" y1="862.2" x2="259.8" y2="858.3" stroke="#5e6270" stroke-width="1.6" stroke-linecap="square"/><polygon points="273,857.5 284,852 284,863" fill="#aeb2c3"/><line x1="273.8" y1="857.5" x2="283.5" y2="852.8" stroke="#e9ebf0" stroke-width="1.6" stroke-linecap="square"/><line x1="274.2" y1="858.3" x2="283.5" y2="862.2" stroke="#5e6270" stroke-width="1.6" stroke-linecap="square"/><line x1="283.2" y1="852.5" x2="283.2" y2="862.5" stroke="#5e6270" stroke-width="1.6" stroke-linecap="square"/><polygon points="1043,857.5 1032,852 1032,863" fill="#aeb2c3"/><line x1="1032.8" y1="852.5" x2="1032.8" y2="862.5" stroke="#e9ebf0" stroke-width="1.6" stroke-linecap="square"/><line x1="1032.5" y1="852.8" x2="1042.2" y2="857.5" stroke="#e9ebf0" stroke-width="1.6" stroke-linecap="square"/><line x1="1032.5" y1="862.2" x2="1041.8" y2="858.3" stroke="#5e6270" stroke-width="1.6" stroke-linecap="square"/><polygon points="1056.5,62 1051,73 1062,73" fill="#aeb2c3"/><line x1="1056.5" y1="62.8" x2="1051.8" y2="72.2" stroke="#e9ebf0" stroke-width="1.6" stroke-linecap="square"/><line x1="1056.9" y1="63.2" x2="1061.2" y2="71.5" stroke="#5e6270" stroke-width="1.6" stroke-linecap="square"/><line x1="1052" y1="72" x2="1061.5" y2="72" stroke="#5e6270" stroke-width="1.8" stroke-linecap="square"/><polygon points="1056.5,843 1051,833 1062,833" fill="#aeb2c3"/><line x1="1052" y1="833.8" x2="1061.5" y2="833.8" stroke="#e9ebf0" stroke-width="1.6" stroke-linecap="square"/><line x1="1051.8" y1="833.5" x2="1056.5" y2="842.2" stroke="#e9ebf0" stroke-width="1.6" stroke-linecap="square"/><line x1="1061.2" y1="834" x2="1056.9" y2="842" stroke="#5e6270" stroke-width="1.6" stroke-linecap="square"/></g>
<defs><clipPath id="wc"><rect x="271" y="60" width="774" height="786"/></clipPath></defs>
<g clip-path="url(#wc)"><text x="318.82" y="829" class="rl" text-anchor="middle" transform="matrix(0.85 0 0 1 0 0)">0</text><text x="611.18 627.65 635.88" y="829" class="rl" text-anchor="middle" transform="matrix(0.85 0 0 1 0 0)">1us</text><text x="917.65 934.12 942.35" y="829" class="rl" text-anchor="middle" transform="matrix(0.85 0 0 1 0 0)">2us</text><text x="1224.12 1240.59 1248.82" y="829" class="rl" text-anchor="middle" transform="matrix(0.85 0 0 1 0 0)">3us</text><text x="326.47 334.71 342.94 351.18 359.41 367.65 375.88 384.12" y="132" class="wv" text-anchor="middle" transform="matrix(0.85 0 0 1 0 0)">00000000</text><text x="1060.59 1068.82 1077.06 1085.29 1093.53 1101.76 1110.00 1118.24" y="132" class="wv" text-anchor="middle" transform="matrix(0.85 0 0 1 0 0)">00000004</text><text x="326.47 334.71 342.94" y="151" class="wv" text-anchor="middle" transform="matrix(0.85 0 0 1 0 0)">000</text><text x="408.09 418.38 428.68 438.97 449.26 459.56 469.85 480.15" y="208" class="wv" text-anchor="middle" transform="matrix(0.68 0 0 1 0 0)">XXXXXXXX</text><text x="877.06 885.29 893.53 901.76 910.00 918.24 926.47 934.71" y="208" class="wv" text-anchor="middle" transform="matrix(0.85 0 0 1 0 0)">00000100</text><text x="326.47 334.71 342.94 351.18 359.41 367.65 375.88 384.12" y="227" class="wv" text-anchor="middle" transform="matrix(0.85 0 0 1 0 0)">00000000</text><text x="561.03 571.32 581.62 591.91 602.21 612.50 622.79 633.09" y="227" class="wv" text-anchor="middle" transform="matrix(0.68 0 0 1 0 0)">XXXXXXXX</text><text x="815.88 824.12 832.35 840.59 848.82 857.06 865.29 873.53" y="227" class="wv" text-anchor="middle" transform="matrix(0.85 0 0 1 0 0)">00000004</text><text x="938.24 946.47 954.71 962.94 971.18 979.41 987.65 995.88" y="227" class="wv" text-anchor="middle" transform="matrix(0.85 0 0 1 0 0)">00000100</text><text x="326.47 334.71 342.94 351.18 359.41 367.65 375.88 384.12" y="246" class="wv" text-anchor="middle" transform="matrix(0.85 0 0 1 0 0)">00000000</text><text x="637.50 647.79 658.09 668.38 678.68 688.97 699.26 709.56" y="246" class="wv" text-anchor="middle" transform="matrix(0.68 0 0 1 0 0)">XXXXXXXX</text><text x="877.06 885.29 893.53 901.76 910.00 918.24 926.47 934.71" y="246" class="wv" text-anchor="middle" transform="matrix(0.85 0 0 1 0 0)">00000004</text><text x="999.41 1007.65 1015.88 1024.12 1032.35 1040.59 1048.82 1057.06" y="246" class="wv" text-anchor="middle" transform="matrix(0.85 0 0 1 0 0)">00000100</text><text x="396.43 406.43 416.43 426.43 436.43 446.43 456.43 466.43" y="265" class="wv" text-anchor="middle" transform="matrix(0.7 0 0 1 0 0)">ZZZZZZZZ</text><text x="571.18 579.41 587.65 595.88 604.12 612.35 620.59 628.82" y="265" class="wv" text-anchor="middle" transform="matrix(0.85 0 0 1 0 0)">00000000</text><text x="877.06 885.29 893.53 901.76 910.00 918.24 926.47 934.71" y="265" class="wv" text-anchor="middle" transform="matrix(0.85 0 0 1 0 0)">00000100</text><text x="396.43 406.43 416.43 426.43 436.43 446.43 456.43 466.43" y="284" class="wv" text-anchor="middle" transform="matrix(0.7 0 0 1 0 0)">ZZZZZZZZ</text><text x="815.88 824.12 832.35 840.59 848.82 857.06 865.29 873.53" y="284" class="wv" text-anchor="middle" transform="matrix(0.85 0 0 1 0 0)">00000000</text><text x="326.47 334.71" y="303" class="wv" text-anchor="middle" transform="matrix(0.85 0 0 1 0 0)">00</text><text x="815.88 824.12" y="303" class="wv" text-anchor="middle" transform="matrix(0.85 0 0 1 0 0)">11</text><text x="877.06 885.29" y="303" class="wv" text-anchor="middle" transform="matrix(0.85 0 0 1 0 0)">00</text><text x="1060.59 1068.82" y="303" class="wv" text-anchor="middle" transform="matrix(0.85 0 0 1 0 0)">01</text><text x="1121.76 1130.00" y="303" class="wv" text-anchor="middle" transform="matrix(0.85 0 0 1 0 0)">10</text><text x="1182.94 1191.18" y="303" class="wv" text-anchor="middle" transform="matrix(0.85 0 0 1 0 0)">00</text><text x="326.47 334.71" y="322" class="wv" text-anchor="middle" transform="matrix(0.85 0 0 1 0 0)">00</text><text x="815.88 824.12" y="322" class="wv" text-anchor="middle" transform="matrix(0.85 0 0 1 0 0)">10</text><text x="877.06 885.29" y="322" class="wv" text-anchor="middle" transform="matrix(0.85 0 0 1 0 0)">00</text><text x="326.47 334.71 342.94 351.18 359.41" y="341" class="wv" text-anchor="middle" transform="matrix(0.85 0 0 1 0 0)">00000</text><text x="571.18 579.41 587.65 595.88 604.12" y="341" class="wv" text-anchor="middle" transform="matrix(0.85 0 0 1 0 0)">01000</text><text x="632.35 640.59 648.82 657.06 665.29" y="341" class="wv" text-anchor="middle" transform="matrix(0.85 0 0 1 0 0)">00000</text><text x="815.88 824.12 832.35 840.59 848.82" y="341" class="wv" text-anchor="middle" transform="matrix(0.85 0 0 1 0 0)">00001</text><text x="877.06 885.29 893.53 901.76 910.00" y="341" class="wv" text-anchor="middle" transform="matrix(0.85 0 0 1 0 0)">00000</text><text x="1060.59 1068.82 1077.06 1085.29 1093.53" y="341" class="wv" text-anchor="middle" transform="matrix(0.85 0 0 1 0 0)">10000</text><text x="1121.76 1130.00 1138.24 1146.47 1154.71" y="341" class="wv" text-anchor="middle" transform="matrix(0.85 0 0 1 0 0)">00000</text><text x="1182.94 1191.18 1199.41 1207.65 1215.88" y="341" class="wv" text-anchor="middle" transform="matrix(0.85 0 0 1 0 0)">01000</text><text x="326.47 334.71 342.94 351.18 359.41 367.65" y="360" class="wv" text-anchor="middle" transform="matrix(0.85 0 0 1 0 0)">000000</text><text x="632.35 640.59 648.82 657.06 665.29 673.53" y="360" class="wv" text-anchor="middle" transform="matrix(0.85 0 0 1 0 0)">001000</text><text x="693.53 701.76 710.00 718.24 726.47 734.71" y="360" class="wv" text-anchor="middle" transform="matrix(0.85 0 0 1 0 0)">000100</text><text x="754.71 762.94 771.18 779.41 787.65 795.88" y="360" class="wv" text-anchor="middle" transform="matrix(0.85 0 0 1 0 0)">100010</text><text x="815.88 824.12 832.35 840.59 848.82 857.06" y="360" class="wv" text-anchor="middle" transform="matrix(0.85 0 0 1 0 0)">000000</text><text x="938.24 946.47 954.71 962.94 971.18 979.41" y="360" class="wv" text-anchor="middle" transform="matrix(0.85 0 0 1 0 0)">101000</text><text x="1060.59 1068.82 1077.06 1085.29 1093.53 1101.76" y="360" class="wv" text-anchor="middle" transform="matrix(0.85 0 0 1 0 0)">001100</text><text x="1121.76 1130.00 1138.24 1146.47 1154.71 1162.94" y="360" class="wv" text-anchor="middle" transform="matrix(0.85 0 0 1 0 0)">000000</text><text x="326.47 334.71 342.94 351.18 359.41" y="436" class="wv" text-anchor="middle" transform="matrix(0.85 0 0 1 0 0)">00000</text><text x="754.71 762.94 771.18 779.41 787.65" y="436" class="wv" text-anchor="middle" transform="matrix(0.85 0 0 1 0 0)">00001</text><text x="815.88 824.12 832.35 840.59 848.82" y="436" class="wv" text-anchor="middle" transform="matrix(0.85 0 0 1 0 0)">01001</text><text x="938.24 946.47 954.71 962.94 971.18" y="436" class="wv" text-anchor="middle" transform="matrix(0.85 0 0 1 0 0)">00100</text><text x="1060.59 1068.82 1077.06 1085.29 1093.53" y="436" class="wv" text-anchor="middle" transform="matrix(0.85 0 0 1 0 0)">00101</text><text x="1121.76 1130.00 1138.24 1146.47 1154.71" y="436" class="wv" text-anchor="middle" transform="matrix(0.85 0 0 1 0 0)">00000</text><text x="326.47 334.71 342.94 351.18 359.41" y="455" class="wv" text-anchor="middle" transform="matrix(0.85 0 0 1 0 0)">00000</text><text x="571.18 579.41 587.65 595.88 604.12" y="455" class="wv" text-anchor="middle" transform="matrix(0.85 0 0 1 0 0)">01001</text><text x="632.35 640.59 648.82 657.06 665.29" y="455" class="wv" text-anchor="middle" transform="matrix(0.85 0 0 1 0 0)">00001</text><text x="693.53 701.76 710.00 718.24 726.47" y="455" class="wv" text-anchor="middle" transform="matrix(0.85 0 0 1 0 0)">00010</text><text x="815.88 824.12 832.35 840.59 848.82" y="455" class="wv" text-anchor="middle" transform="matrix(0.85 0 0 1 0 0)">00011</text><text x="877.06 885.29 893.53 901.76 910.00" y="455" class="wv" text-anchor="middle" transform="matrix(0.85 0 0 1 0 0)">00100</text><text x="938.24 946.47 954.71 962.94 971.18" y="455" class="wv" text-anchor="middle" transform="matrix(0.85 0 0 1 0 0)">00011</text><text x="1060.59 1068.82 1077.06 1085.29 1093.53" y="455" class="wv" text-anchor="middle" transform="matrix(0.85 0 0 1 0 0)">00000</text><text x="326.47 334.71 342.94 351.18 359.41" y="474" class="wv" text-anchor="middle" transform="matrix(0.85 0 0 1 0 0)">00000</text><text x="754.71 762.94 771.18 779.41 787.65" y="474" class="wv" text-anchor="middle" transform="matrix(0.85 0 0 1 0 0)">01001</text><text x="815.88 824.12 832.35 840.59 848.82" y="474" class="wv" text-anchor="middle" transform="matrix(0.85 0 0 1 0 0)">00001</text><text x="877.06 885.29 893.53 901.76 910.00" y="474" class="wv" text-anchor="middle" transform="matrix(0.85 0 0 1 0 0)">00010</text><text x="938.24 946.47 954.71 962.94 971.18" y="474" class="wv" text-anchor="middle" transform="matrix(0.85 0 0 1 0 0)">00011</text><text x="1060.59 1068.82 1077.06 1085.29 1093.53" y="474" class="wv" text-anchor="middle" transform="matrix(0.85 0 0 1 0 0)">00100</text><text x="1121.76 1130.00 1138.24 1146.47 1154.71" y="474" class="wv" text-anchor="middle" transform="matrix(0.85 0 0 1 0 0)">00000</text><text x="1182.94 1191.18 1199.41 1207.65 1215.88" y="474" class="wv" text-anchor="middle" transform="matrix(0.85 0 0 1 0 0)">00101</text><text x="408.09 418.38 428.68 438.97 449.26 459.56 469.85 480.15" y="607" class="wv" text-anchor="middle" transform="matrix(0.68 0 0 1 0 0)">XXXXXXXX</text><text x="418.24 426.47 434.71 442.94 451.18 459.41 467.65 475.88" y="607" class="wv" text-anchor="middle" transform="matrix(0.85 0 0 1 0 0)">00000000</text><text x="846.47 854.71 862.94 871.18 879.41 887.65 895.88 904.12" y="607" class="wv" text-anchor="middle" transform="matrix(0.85 0 0 1 0 0)">00000100</text><text x="1030.00 1038.24 1046.47 1054.71 1062.94 1071.18 1079.41 1087.65" y="607" class="wv" text-anchor="middle" transform="matrix(0.85 0 0 1 0 0)">00000000</text><text x="326.47 334.71 342.94 351.18 359.41 367.65 375.88 384.12" y="626" class="wv" text-anchor="middle" transform="matrix(0.85 0 0 1 0 0)">00000000</text><text x="1121.76 1130.00 1138.24 1146.47 1154.71 1162.94 1171.18 1179.41" y="626" class="wv" text-anchor="middle" transform="matrix(0.85 0 0 1 0 0)">00000000</text><text x="326.47 334.71 342.94 351.18 359.41 367.65 375.88 384.12" y="664" class="wv" text-anchor="middle" transform="matrix(0.85 0 0 1 0 0)">00000000</text><text x="938.24 946.47 954.71 962.94 971.18 979.41 987.65 995.88" y="664" class="wv" text-anchor="middle" transform="matrix(0.85 0 0 1 0 0)">00000120</text><text x="408.09 418.38 428.68 438.97 449.26 459.56 469.85 480.15" y="683" class="wv" text-anchor="middle" transform="matrix(0.68 0 0 1 0 0)">XXXXXXXX</text><text x="968.82 977.06 993.53 1001.76 1010.00 1018.24" y="683" class="wv" text-anchor="middle" transform="matrix(0.85 0 0 1 0 0)">140000</text><text x="1073.72" y="683" class="wv" text-anchor="middle" transform="matrix(0.78 0 0 1 0 0)">A</text><text x="1163.33" y="683" class="wv" text-anchor="middle" transform="matrix(0.75 0 0 1 0 0)">C</text><text x="326.47 334.71 342.94 351.18 359.41 367.65 375.88 384.12" y="778" class="wv" text-anchor="middle" transform="matrix(0.85 0 0 1 0 0)">00000000</text><text x="938.24 946.47 954.71 962.94 971.18 979.41 987.65 995.88" y="778" class="wv" text-anchor="middle" transform="matrix(0.85 0 0 1 0 0)">00000100</text><text x="399.29 409.29 419.29 429.29 439.29 449.29 459.29 469.29" y="797" class="wv" text-anchor="middle" transform="matrix(0.7 0 0 1 0 0)">ZZZZZZZZ</text><text x="1300.71 1310.71 1320.71 1330.71 1340.71 1350.71 1360.71 1370.71" y="797" class="wv" text-anchor="middle" transform="matrix(0.7 0 0 1 0 0)">ZZZZZZZZ</text></g>
<g><text x="55.68 63.64 71.59 79.55 95.45" y="74" class="nm" text-anchor="middle" transform="matrix(0.88 0 0 1 0 0)">/clk=</text><text x="115.29" y="74" class="nmd" text-anchor="middle" transform="matrix(0.85 0 0 1 0 0)">1</text><text x="55.68 63.64 71.59 79.55 87.50 95.45 103.41 111.36 119.32 127.27 143.18 151.14 159.09 167.05 175.00 190.91" y="93" class="nm" text-anchor="middle" transform="matrix(0.88 0 0 1 0 0)">/uut/clockx_int=</text><text x="140.00 214.12" y="93" class="nmd" text-anchor="middle" transform="matrix(0.85 0 0 1 0 0)">20</text><text x="55.68 63.64 71.59 79.55 87.50 95.45 111.36" y="112" class="nm" text-anchor="middle" transform="matrix(0.88 0 0 1 0 0)">/reset=</text><text x="131.76" y="112" class="nmd" text-anchor="middle" transform="matrix(0.85 0 0 1 0 0)">0</text><text x="55.68 63.64 71.59 79.55 87.50 95.45 103.41 111.36 119.32 127.27 135.23 143.18 151.14 159.09 167.05 175.00 190.91" y="131" class="nm" text-anchor="middle" transform="matrix(0.88 0 0 1 0 0)">/uut/lmdrbus_int=</text><text x="214.12 222.35 230.59 238.82 247.06 255.29 263.53 271.76" y="131" class="nmd" text-anchor="middle" transform="matrix(0.85 0 0 1 0 0)">00000004</text><text x="55.68 63.64 71.59 79.55 87.50 95.45 103.41 111.36 119.32 127.27 135.23 143.18 151.14 159.09 167.05 175.00 182.95 190.91 198.86 206.82 222.73" y="150" class="nm" text-anchor="middle" transform="matrix(0.88 0 0 1 0 0)">/uut/lmdr_select_int=</text><text x="247.06 255.29 263.53" y="150" class="nmd" text-anchor="middle" transform="matrix(0.85 0 0 1 0 0)">000</text><text x="55.68 63.64 71.59 79.55 87.50 95.45 103.41 111.36 119.32 127.27 135.23 143.18 151.14 159.09 167.05 175.00 182.95 190.91 198.86 206.82 222.73" y="169" class="nm" text-anchor="middle" transform="matrix(0.88 0 0 1 0 0)">/uut/c/writelmdr_int=</text><text x="247.06" y="169" class="nmd" text-anchor="middle" transform="matrix(0.85 0 0 1 0 0)">0</text><text x="55.68 63.64 71.59 79.55 87.50 95.45 103.41 111.36 119.32 127.27 135.23 143.18 151.14 159.09 167.05 175.00 182.95 190.91 198.86 214.77" y="188" class="nm" text-anchor="middle" transform="matrix(0.88 0 0 1 0 0)">/uut/lmdr_zflag_int=</text><text x="238.82" y="188" class="nmd" text-anchor="middle" transform="matrix(0.85 0 0 1 0 0)">0</text><text x="55.68 63.64 71.59 79.55 87.50 95.45 103.41 111.36 119.32 127.27 135.23 143.18 151.14 159.09 167.05 175.00 190.91" y="207" class="nm" text-anchor="middle" transform="matrix(0.88 0 0 1 0 0)">/uut/destbus_int=</text><text x="214.12 222.35 230.59 238.82 247.06 255.29 263.53 271.76" y="207" class="nmd" text-anchor="middle" transform="matrix(0.85 0 0 1 0 0)">00000000</text><text x="55.68 63.64 71.59 79.55 87.50 95.45 103.41 111.36 119.32 127.27 135.23 143.18 151.14 159.09 167.05 175.00 182.95 190.91 206.82" y="226" class="nm" text-anchor="middle" transform="matrix(0.88 0 0 1 0 0)">/uut/destbus_a_int=</text><text x="288.24 298.53 308.82 319.12 329.41 339.71 350.00 360.29" y="226" class="nmd" text-anchor="middle" transform="matrix(0.68 0 0 1 0 0)">XXXXXXXX</text><text x="55.68 63.64 71.59 79.55 87.50 95.45 103.41 111.36 119.32 127.27 135.23 143.18 151.14 159.09 167.05 175.00 182.95 190.91 206.82" y="245" class="nm" text-anchor="middle" transform="matrix(0.88 0 0 1 0 0)">/uut/destbus_b_int=</text><text x="230.59 238.82 247.06 255.29 263.53 271.76 280.00 288.24" y="245" class="nmd" text-anchor="middle" transform="matrix(0.85 0 0 1 0 0)">00000001</text><text x="55.68 63.64 71.59 79.55 87.50 95.45 111.36 119.32 127.27 135.23 143.18 151.14 159.09 175.00" y="264" class="nm" text-anchor="middle" transform="matrix(0.88 0 0 1 0 0)">/uut/sbus_int=</text><text x="107.06 197.65 205.88 214.12 222.35 230.59 238.82 247.06 255.29" y="264" class="nmd" text-anchor="middle" transform="matrix(0.85 0 0 1 0 0)">100000000</text><text x="55.68 63.64 71.59 79.55 87.50 95.45 111.36 119.32 127.27 135.23 143.18 151.14 159.09 175.00" y="283" class="nm" text-anchor="middle" transform="matrix(0.88 0 0 1 0 0)">/uut/sbus_int=</text><text x="107.06 197.65 205.88 214.12 222.35 230.59 238.82 247.06 255.29" y="283" class="nmd" text-anchor="middle" transform="matrix(0.85 0 0 1 0 0)">200000000</text><text x="55.68 63.64 71.59 79.55 87.50 95.45 111.36 119.32 127.27 135.23 143.18 151.14 159.09 167.05 175.00 182.95 198.86" y="302" class="nm" text-anchor="middle" transform="matrix(0.88 0 0 1 0 0)">/uut/sselect_int=</text><text x="107.06 222.35 230.59" y="302" class="nmd" text-anchor="middle" transform="matrix(0.85 0 0 1 0 0)">100</text><text x="55.68 63.64 71.59 79.55 87.50 95.45 111.36 119.32 127.27 135.23 143.18 151.14 159.09 167.05 175.00 182.95 198.86" y="321" class="nm" text-anchor="middle" transform="matrix(0.88 0 0 1 0 0)">/uut/sselect_int=</text><text x="107.06 222.35 230.59" y="321" class="nmd" text-anchor="middle" transform="matrix(0.85 0 0 1 0 0)">200</text><text x="55.68 63.64 71.59 79.55 87.50 95.45 103.41 111.36 119.32 127.27 135.23 143.18 151.14 159.09 175.00" y="340" class="nm" text-anchor="middle" transform="matrix(0.88 0 0 1 0 0)">/uut/aluop_int=</text><text x="197.65 205.88 214.12 222.35 230.59" y="340" class="nmd" text-anchor="middle" transform="matrix(0.85 0 0 1 0 0)">01000</text><text x="55.68 63.64 71.59 79.55 87.50 95.45 103.41 111.36 119.32 127.27 135.23 143.18 151.14 159.09 167.05 175.00 182.95 190.91 206.82" y="359" class="nm" text-anchor="middle" transform="matrix(0.88 0 0 1 0 0)">/uut/opcodealu_int=</text><text x="230.59 238.82 247.06 255.29 263.53 271.76" y="359" class="nmd" text-anchor="middle" transform="matrix(0.85 0 0 1 0 0)">000000</text><text x="55.68 63.64 71.59 79.55 87.50 95.45 103.41 111.36 119.32 127.27 135.23 143.18 151.14 159.09 175.00" y="378" class="nm" text-anchor="middle" transform="matrix(0.88 0 0 1 0 0)">/uut/zflag_int=</text><text x="197.65" y="378" class="nmd" text-anchor="middle" transform="matrix(0.85 0 0 1 0 0)">1</text><text x="55.68 63.64 71.59 79.55 87.50 95.45 103.41 111.36 119.32 127.27 135.23 143.18 151.14 159.09 167.05 175.00 182.95 190.91 198.86 206.82 214.77 230.68" y="397" class="nm" text-anchor="middle" transform="matrix(0.88 0 0 1 0 0)">/uut/dest_a_zflag_int=</text><text x="255.29" y="397" class="nmd" text-anchor="middle" transform="matrix(0.85 0 0 1 0 0)">0</text><text x="55.68 63.64 71.59 79.55 87.50 95.45 103.41 111.36 119.32 127.27 135.23 143.18 151.14 159.09 167.05 175.00 182.95 190.91 198.86 206.82 214.77 230.68" y="416" class="nm" text-anchor="middle" transform="matrix(0.88 0 0 1 0 0)">/uut/dest_b_zflag_int=</text><text x="255.29" y="416" class="nmd" text-anchor="middle" transform="matrix(0.85 0 0 1 0 0)">0</text><text x="55.68 63.64 71.59 79.55 87.50 95.45 103.41 111.36 119.32 127.27 143.18 151.14 159.09 167.05 182.95" y="435" class="nm" text-anchor="middle" transform="matrix(0.88 0 0 1 0 0)">/uut/ir_rs_int=</text><text x="140.00 205.88 214.12 222.35 230.59 238.82" y="435" class="nmd" text-anchor="middle" transform="matrix(0.85 0 0 1 0 0)">100000</text><text x="55.68 63.64 71.59 79.55 87.50 95.45 103.41 111.36 119.32 127.27 143.18 151.14 159.09 167.05 182.95" y="454" class="nm" text-anchor="middle" transform="matrix(0.88 0 0 1 0 0)">/uut/ir_rs_int=</text><text x="140.00 205.88 214.12 222.35 230.59 238.82" y="454" class="nmd" text-anchor="middle" transform="matrix(0.85 0 0 1 0 0)">200000</text><text x="55.68 63.64 71.59 79.55 87.50 95.45 103.41 111.36 119.32 127.27 135.23 143.18 151.14 159.09 167.05 175.00 182.95 198.86" y="473" class="nm" text-anchor="middle" transform="matrix(0.88 0 0 1 0 0)">/uut/rsdout_b_int=</text><text x="222.35 230.59 238.82 247.06 255.29" y="473" class="nmd" text-anchor="middle" transform="matrix(0.85 0 0 1 0 0)">00101</text><text x="55.68 63.64 71.59 79.55 87.50 95.45 103.41 111.36 119.32 127.27 135.23 143.18 151.14 159.09 167.05 175.00 182.95 190.91 206.82" y="492" class="nm" text-anchor="middle" transform="matrix(0.88 0 0 1 0 0)">/uut/regselect_int=</text><text x="230.59" y="492" class="nmd" text-anchor="middle" transform="matrix(0.85 0 0 1 0 0)">0</text><text x="55.68 63.64 71.59 79.55 87.50 95.45 103.41 111.36 119.32 127.27 135.23 143.18 151.14 159.09 167.05 175.00 190.91" y="511" class="nm" text-anchor="middle" transform="matrix(0.88 0 0 1 0 0)">/uut/regload_int=</text><text x="214.12" y="511" class="nmd" text-anchor="middle" transform="matrix(0.85 0 0 1 0 0)">1</text><text x="55.68 63.64 71.59 79.55 87.50 95.45 103.41 111.36 119.32 127.27 135.23 143.18 151.14 159.09 175.00" y="530" class="nm" text-anchor="middle" transform="matrix(0.88 0 0 1 0 0)">/uut/aload_int=</text><text x="197.65" y="530" class="nmd" text-anchor="middle" transform="matrix(0.85 0 0 1 0 0)">1</text><text x="55.68 63.64 71.59 79.55 87.50 95.45 103.41 111.36 119.32 127.27 135.23 143.18 151.14 159.09 175.00" y="549" class="nm" text-anchor="middle" transform="matrix(0.88 0 0 1 0 0)">/uut/bload_int=</text><text x="197.65" y="549" class="nmd" text-anchor="middle" transform="matrix(0.85 0 0 1 0 0)">1</text><text x="55.68 63.64 71.59 79.55 87.50 95.45 103.41 111.36 119.32 127.27 135.23 143.18 159.09" y="568" class="nm" text-anchor="middle" transform="matrix(0.88 0 0 1 0 0)">/uut/aoe_int=</text><text x="181.18" y="568" class="nmd" text-anchor="middle" transform="matrix(0.85 0 0 1 0 0)">1</text><text x="55.68 63.64 71.59 79.55 87.50 95.45 103.41 111.36 119.32 127.27 135.23 143.18 159.09" y="587" class="nm" text-anchor="middle" transform="matrix(0.88 0 0 1 0 0)">/uut/boe_int=</text><text x="181.18" y="587" class="nmd" text-anchor="middle" transform="matrix(0.85 0 0 1 0 0)">0</text><text x="55.68 63.64 71.59 79.55 87.50 95.45 103.41 111.36 119.32 127.27 135.23 143.18 151.14 159.09 167.05 175.00 190.91" y="606" class="nm" text-anchor="middle" transform="matrix(0.88 0 0 1 0 0)">/uut/aregbus_int=</text><text x="214.12 222.35 230.59 238.82 247.06 255.29 263.53 271.76" y="606" class="nmd" text-anchor="middle" transform="matrix(0.85 0 0 1 0 0)">00000000</text><text x="55.68 63.64 71.59 79.55 87.50 95.45 103.41 111.36 119.32 127.27 135.23 143.18 151.14 159.09 167.05 175.00 190.91" y="625" class="nm" text-anchor="middle" transform="matrix(0.88 0 0 1 0 0)">/uut/bregout_int=</text><text x="214.12 222.35 230.59 238.82 247.06 255.29 263.53 271.76" y="625" class="nmd" text-anchor="middle" transform="matrix(0.85 0 0 1 0 0)">00000000</text><text x="55.68 63.64 71.59 79.55 87.50 95.45 103.41 111.36 119.32 127.27 135.23 143.18 151.14 159.09 167.05 175.00 182.95 190.91 198.86 214.77" y="644" class="nm" text-anchor="middle" transform="matrix(0.88 0 0 1 0 0)">/uut/abus_zflag_int=</text><text x="238.82" y="644" class="nmd" text-anchor="middle" transform="matrix(0.85 0 0 1 0 0)">1</text><text x="55.68 63.64 71.59 79.55 87.50 95.45 103.41 111.36 119.32 127.27 135.23 143.18 151.14 167.05" y="663" class="nm" text-anchor="middle" transform="matrix(0.88 0 0 1 0 0)">/iaddrbus_int=</text><text x="189.41 197.65 205.88 214.12 222.35 230.59 238.82 247.06" y="663" class="nmd" text-anchor="middle" transform="matrix(0.85 0 0 1 0 0)">00000134</text><text x="55.68 63.64 71.59 79.55 87.50 95.45 103.41 111.36 119.32 127.27 135.23 143.18 151.14 167.05" y="682" class="nm" text-anchor="middle" transform="matrix(0.88 0 0 1 0 0)">/instrbus_int=</text><text x="214.67" y="682" class="nmd" text-anchor="middle" transform="matrix(0.75 0 0 1 0 0)">D</text><text x="197.65 205.88 214.12 222.35 230.59 238.82 247.06" y="682" class="nmd" text-anchor="middle" transform="matrix(0.85 0 0 1 0 0)">8000000</text><text x="55.68 63.64 71.59 79.55 87.50 95.45 103.41 111.36 119.32 127.27 135.23 143.18 151.14 167.05" y="701" class="nm" text-anchor="middle" transform="matrix(0.88 0 0 1 0 0)">/imemwait_int=</text><text x="189.41" y="701" class="nmd" text-anchor="middle" transform="matrix(0.85 0 0 1 0 0)">0</text><text x="55.68 63.64 71.59 79.55 87.50 95.45 103.41 111.36 119.32 127.27 135.23 143.18 151.14 159.09 167.05 175.00 182.95 190.91 206.82" y="720" class="nm" text-anchor="middle" transform="matrix(0.88 0 0 1 0 0)">/uut/imemstall_int=</text><text x="230.59" y="720" class="nmd" text-anchor="middle" transform="matrix(0.85 0 0 1 0 0)">0</text><text x="55.68 63.64 71.59 79.55 87.50 95.45 103.41 111.36 119.32 127.27 135.23 143.18 151.14 159.09 167.05 175.00 190.91" y="739" class="nm" text-anchor="middle" transform="matrix(0.88 0 0 1 0 0)">/imemstart_l_int=</text><text x="214.12" y="739" class="nmd" text-anchor="middle" transform="matrix(0.85 0 0 1 0 0)">0</text><text x="55.68 63.64 71.59 79.55 87.50 95.45 103.41 111.36 119.32 127.27 135.23 143.18 151.14 159.09 167.05 175.00 182.95 190.91 198.86 206.82 222.73" y="758" class="nm" text-anchor="middle" transform="matrix(0.88 0 0 1 0 0)">/uut/noimemstart_int=</text><text x="247.06" y="758" class="nmd" text-anchor="middle" transform="matrix(0.85 0 0 1 0 0)">0</text><text x="55.68 63.64 71.59 79.55 87.50 95.45 103.41 111.36 119.32 127.27 135.23 143.18 151.14 167.05" y="777" class="nm" text-anchor="middle" transform="matrix(0.88 0 0 1 0 0)">/daddrbus_int=</text><text x="189.41 197.65 205.88 214.12 222.35 230.59 238.82 247.06" y="777" class="nmd" text-anchor="middle" transform="matrix(0.85 0 0 1 0 0)">00000100</text><text x="55.68 63.64 71.59 79.55 87.50 95.45 103.41 111.36 119.32 127.27 135.23 143.18 159.09" y="796" class="nm" text-anchor="middle" transform="matrix(0.88 0 0 1 0 0)">/databus_int=</text><text x="220.00 230.00 240.00 250.00 260.00 270.00 280.00 290.00" y="796" class="nmd" text-anchor="middle" transform="matrix(0.7 0 0 1 0 0)">ZZZZZZZZ</text><text x="19" y="44" class="mn">File</text><text x="60" y="44" class="mn">Edit</text><text x="104" y="44" class="mn">Zoom</text><text x="161" y="44" class="mn">Prop</text><text x="209" y="44" class="mn">Cursor</text><text x="528.5" y="20" class="tt" text-anchor="middle">Wave</text><text x="18.24 84.12 92.35 100.59 108.82" y="884" class="std" text-anchor="middle" transform="matrix(0.85 0 0 1 0 0)">02977</text><text x="33.52 41.48 57.39 65.34 121.02 128.98" y="884" class="st" text-anchor="middle" transform="matrix(0.88 0 0 1 0 0)">nstons</text></g>
</svg></body></html>
